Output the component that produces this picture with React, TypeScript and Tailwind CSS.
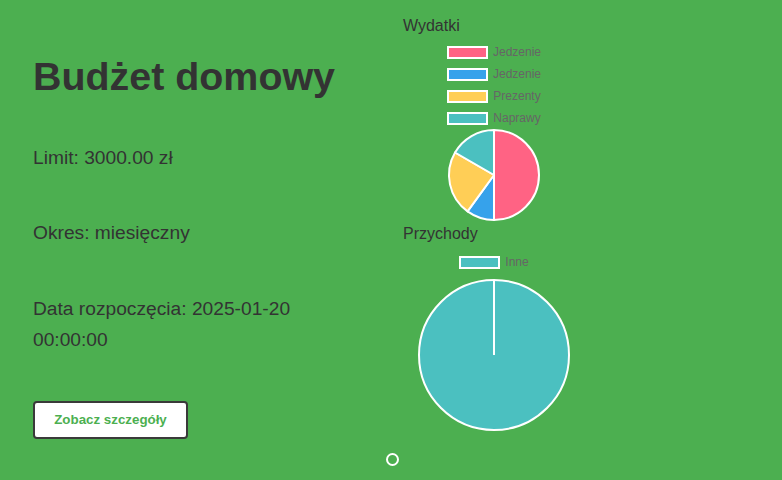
import React from "react";

type Slice = { label: string; value: number; color: string };

const expenses: Slice[] = [
  { label: "Jedzenie", value: 1500, color: "#FF6384" },
  { label: "Jedzenie", value: 300, color: "#36A2EB" },
  { label: "Prezenty", value: 700, color: "#FFCE56" },
  { label: "Naprawy", value: 500, color: "#4BC0C0" },
];

const incomes: Slice[] = [{ label: "Inne", value: 2000, color: "#4BC0C0" }];

function Pie({ data, r }: { data: Slice[]; r: number }) {
  const w = 182;
  const h = r * 2 + 2;
  const cx = w / 2;
  const cy = h / 2;
  const total = data.reduce((s, d) => s + d.value, 0);
  let acc = 0;
  const pt = (a: number) => {
    const t = (a / 360) * Math.PI * 2 - Math.PI / 2;
    return [cx + r * Math.cos(t), cy + r * Math.sin(t)];
  };
  return (
    <svg width={w} height={h} viewBox={`0 0 ${w} ${h}`} className="block">
      {data.length === 1 ? (
        <g>
          <circle cx={cx} cy={cy} r={r} fill={data[0].color} stroke="#fff" strokeWidth={2} />
          <line x1={cx} y1={cy} x2={cx} y2={cy - r} stroke="#fff" strokeWidth={2} />
        </g>
      ) : (
        data.map((d, i) => {
          const a0 = (acc / total) * 360;
          acc += d.value;
          const a1 = (acc / total) * 360;
          const [x0, y0] = pt(a0);
          const [x1, y1] = pt(a1);
          const large = a1 - a0 > 180 ? 1 : 0;
          return (
            <path
              key={i}
              d={`M ${cx} ${cy} L ${x0} ${y0} A ${r} ${r} 0 ${large} 1 ${x1} ${y1} Z`}
              fill={d.color}
              stroke="#fff"
              strokeWidth={2}
              strokeLinejoin="round"
            />
          );
        })
      )}
    </svg>
  );
}

function Legend({ data }: { data: Slice[] }) {
  return (
    <div className="flex flex-col items-center gap-[9px]">
      {data.map((d, i) => (
        <div key={i} className="flex items-center h-[13px] gap-[5px]">
          <div
            className="w-[41px] h-[13px] border-2 border-white box-border"
            style={{ backgroundColor: d.color }}
          />
          <span className="text-[12px] leading-[13px] text-[#666]">{d.label}</span>
        </div>
      ))}
    </div>
  );
}

export default function App() {
  return (
    <div
      className="relative w-full h-[480px] bg-[#4CAF50] flex text-[#333] overflow-hidden"
      style={{ fontFamily: '"Liberation Sans", Arial, sans-serif' }}
    >
      <div className="w-[403px] shrink-0 pl-[33px] pr-[50px] pt-[53px] flex flex-col items-start">
        <h1 className="text-[39.4px] leading-[46px] font-bold">Budżet domowy</h1>
        <p className="mt-[43px] text-[19.2px] leading-[31px]">Limit: 3000.00 zł</p>
        <p className="mt-[44px] text-[19.2px] leading-[31px]">Okres: miesięczny</p>
        <p className="mt-[45px] text-[19.2px] leading-[31px]">Data rozpoczęcia: 2025-01-20 00:00:00</p>
        <button className="mt-[46px] w-[155px] h-[38px] bg-white border-2 border-[#3a3a3a] rounded-[4px] text-[13.33px] font-bold text-[#4CAF50] flex items-center justify-center">
          Zobacz szczegóły
        </button>
      </div>
      <div className="w-[182px] shrink-0 pt-[16px] flex flex-col">
        <h2 className="text-[16px] leading-[19px]">Wydatki</h2>
        <div className="mt-[11px]">
          <Legend data={expenses} />
        </div>
        <div className="mt-[4px]">
          <Pie data={expenses} r={45} />
        </div>
        <h2 className="mt-[3px] text-[16px] leading-[19px]">Przychody</h2>
        <div className="mt-[13px]">
          <Legend data={incomes} />
        </div>
        <div className="mt-[10px]">
          <Pie data={incomes} r={75} />
        </div>
      </div>
      <div className="absolute left-[386px] bottom-[14px] w-[13px] h-[13px] rounded-full border-2 border-white" />
    </div>
  );
}
